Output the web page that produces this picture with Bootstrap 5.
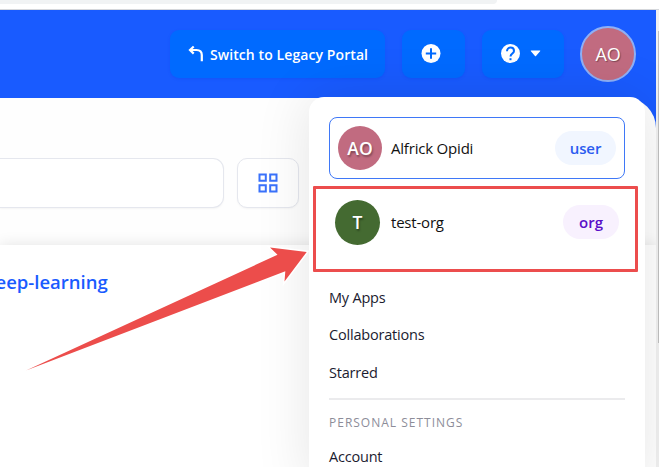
<!DOCTYPE html>
<html lang="en">
<head>
<meta charset="utf-8">
<meta name="viewport" content="width=device-width, initial-scale=1">
<title>Portal</title>
<link href="https://cdn.jsdelivr.net/npm/bootstrap@5.3.0/dist/css/bootstrap.min.css" rel="stylesheet">
<style>
body{font-family:"Open Sans","Noto Sans",sans-serif;font-size:14px;line-height:20px;color:#1b1b2f;width:659px;height:467px;background:#fff}
.chrome{height:10px;border-bottom:1px solid #d5d7db}
.tab-strip{width:497px;height:4px;background:#f1f3f4;border-radius:0 0 14px 0}
.viewport{height:457px}
.portal{width:656px;background:#195bff}
.topbar{height:88px;padding:16px 20px 0 0}
.topbar .btn{height:48px;background:#006aff;color:#fff;border:0;border-radius:9px;font-size:14px;font-weight:600;box-shadow:0 1px 3px rgba(0,60,230,.2);padding:0}
.btn-switch{width:215px;margin-right:17px}
.btn-switch svg{margin-left:1px}
.btn-switch .fit{margin-left:6px;letter-spacing:.09px}
.btn-add{width:63px;margin-right:17px}
.btn-help{width:82px;margin-right:16px}
.disc{border-radius:50%;color:#fff;background:#c16b80;flex:none}
.disc-top{width:56px;height:56px;border:2px solid #8fb0f5;font-size:18px;letter-spacing:-.3px;text-shadow:1px 1px 1px rgba(0,0,0,.35)}
.page{background:#fefefe;border-top-right-radius:30px;height:369px}
.tools{padding-top:60px;height:147px;gap:13px}
.search-box{width:224px;height:50px;border:1px solid #e5e7ee;border-left:0;border-radius:0 11px 11px 0;background:#fff;box-shadow:0 1px 2px rgba(0,0,0,.04)}
.view-btn{width:62px;height:50px;border:1px solid #e5e7ee;border-radius:10px;background:#fff;box-shadow:0 1px 2px rgba(0,0,0,.04)}
.result{height:222px;background:#fff;box-shadow:0 0 14px rgba(0,0,0,.11);padding-top:24px}
.result a{font-size:18.5px;line-height:26px;font-weight:600;letter-spacing:0;color:#195bff;margin-left:-16px}
.account-menu{left:309px;top:97px;width:336px;height:390px;background:#fff;border-radius:15px 15px 0 0;padding:20px;box-shadow:0 0 55px rgba(0,0,0,.105)}
.account-row{height:62px;border:1px solid transparent;border-radius:8px;padding:0 8px}
.account-row.current{border-color:#3f78f7}
.org-row{height:62px;margin-top:12px;padding:0 6px}
.disc-menu{width:44px;height:44px;font-size:17.500px;font-weight:600;text-shadow:1px 2px 2px rgba(0,0,0,.35)}
.disc-org{width:45px;height:45px;background:#446a31}
.who{margin-left:9px;font-size:15px;letter-spacing:-.2px;color:#111}
.org-row .who{margin-left:11px}
.kind{height:34px;border-radius:17px;font-size:15px;font-weight:600}
.kind-user{width:61px;background:#f1f6ff;color:#2b5cf0;letter-spacing:-.1px}
.kind-org{width:56px;background:#f8f1fe;color:#5a0fc8}
.links{margin-top:35px;font-size:14.5px;letter-spacing:-.2px}
.links a{display:block;height:37.4px;color:#1b1b2f;text-decoration:none}
.rule{height:2px;background:#ebebed;margin:-2px 0 13px}
.group-title{font-size:12px;letter-spacing:1px;color:#8d8d99;height:34px}
.scroller{width:3px;background:#f1f1f1;padding:21px 0 0 2px}
.scroller div{height:312px;background:#c1c1c1}
.focus-box{left:313px;top:186px;width:325px;height:86px;border:3px solid #ec4d4d;border-radius:1px}
.pointer{left:0;top:0;pointer-events:none}
.fit{display:inline-block;white-space:nowrap}
</style>
<script src="https://cdn.jsdelivr.net/npm/bootstrap@5.3.0/dist/js/bootstrap.bundle.min.js"></script>
</head>
<body class="position-relative overflow-hidden">
<div class="chrome"><div class="tab-strip"></div></div>
<div class="viewport d-flex">
  <div class="portal">
    <header class="topbar d-flex justify-content-end align-items-start">
      <button class="btn btn-switch d-flex align-items-center justify-content-center mt-1">
        <svg width="16" height="18" viewBox="0 0 16 18" fill="none" stroke="#fff" stroke-width="2.200"><path d="M5.700 1.500 2 5l3.700 3.600M2.200 5H8.500c3.500 0 5.300 1.600 5.300 5V16.300"/></svg>
        <span class="fit">Switch to Legacy Portal</span>
      </button>
      <button class="btn btn-add d-flex align-items-center justify-content-center mt-1" aria-label="Add">
        <svg width="20" height="20" viewBox="0 0 20 20" style="margin-right:6px"><circle cx="10" cy="9.500" r="9.500" fill="#fff"/><path d="M10 4.300v10.400M4.800 9.500h10.400" stroke="#006aff" stroke-width="2"/></svg>
      </button>
      <button class="btn btn-help d-flex align-items-center mt-1" aria-label="Help">
        <svg width="42" height="20" viewBox="0 0 42 20" style="margin-left:18px"><circle cx="10.500" cy="9.500" r="9.500" fill="#fff"/><path d="M7 7.200c0-2.100 1.400-3.600 3.500-3.600S14 4.900 14 6.900c0 2.500-3.500 2.700-3.500 5.600" fill="none" stroke="#006aff" stroke-width="2"/><path d="M9.500 14.200h2v2h-2z" fill="#006aff"/><path d="M31.200 6.500h8.600c.5 0 .6.500.3.800L36 12c-.3.400-.7.400-1 0l-4.100-4.700c-.3-.3-.2-.8.300-.8z" fill="#fff"/></svg>
      </button>
      <div class="disc disc-top d-flex align-items-center justify-content-center">AO</div>
    </header>
    <main class="page">
      <div class="tools d-flex align-items-start">
        <div class="search-box"></div>
        <div class="view-btn d-flex align-items-center justify-content-center">
          <svg width="20" height="20" viewBox="0 0 20 20" fill="none" stroke="#3a72fb" stroke-width="2"><path d="M1.500 1.500h6.300v6.300H1.500zM12.200 1.500h6.300v6.300h-6.300zM1.500 12.200h6.300v6.300H1.500zM12.200 12.200h6.300v6.300h-6.300z"/></svg>
        </div>
      </div>
      <div class="result"><a class="fit text-decoration-none" href="#">deep-learning</a></div>
    </main>
  </div>
  <div class="scroller"><div></div></div>
</div>

<nav class="account-menu position-absolute">
  <div class="account-row current d-flex align-items-center">
    <span class="disc disc-menu d-flex align-items-center justify-content-center">AO</span>
    <span class="who fit">Alfrick Opidi</span>
    <span class="kind kind-user ms-auto d-flex align-items-center justify-content-center">user</span>
  </div>
  <div class="org-row d-flex align-items-center">
    <span class="disc disc-menu disc-org d-flex align-items-center justify-content-center">T</span>
    <span class="who fit">test-org</span>
    <span class="kind kind-org ms-auto d-flex align-items-center justify-content-center">org</span>
  </div>
  <div class="links">
    <a href="#">My Apps</a>
    <a href="#">Collaborations</a>
    <a href="#">Starred</a>
    <div class="rule"></div>
    <div class="group-title">PERSONAL SETTINGS</div>
    <a href="#">Account</a>
  </div>
</nav>
<div class="focus-box position-absolute"></div>
<svg class="pointer position-absolute" width="320" height="380" viewBox="0 0 320 380"><path d="M26.500 370.300 277.500 254.800 270 247.500 306.700 252 284.500 281.500 285.300 271.300z" fill="none" stroke="#fff" stroke-width="3"/><path d="M26 370.500 277.500 254.800 270 247.500 306.700 252 284.500 281.500 285.300 271.300z" fill="#ec4d4b"/></svg>
</body>
</html>
